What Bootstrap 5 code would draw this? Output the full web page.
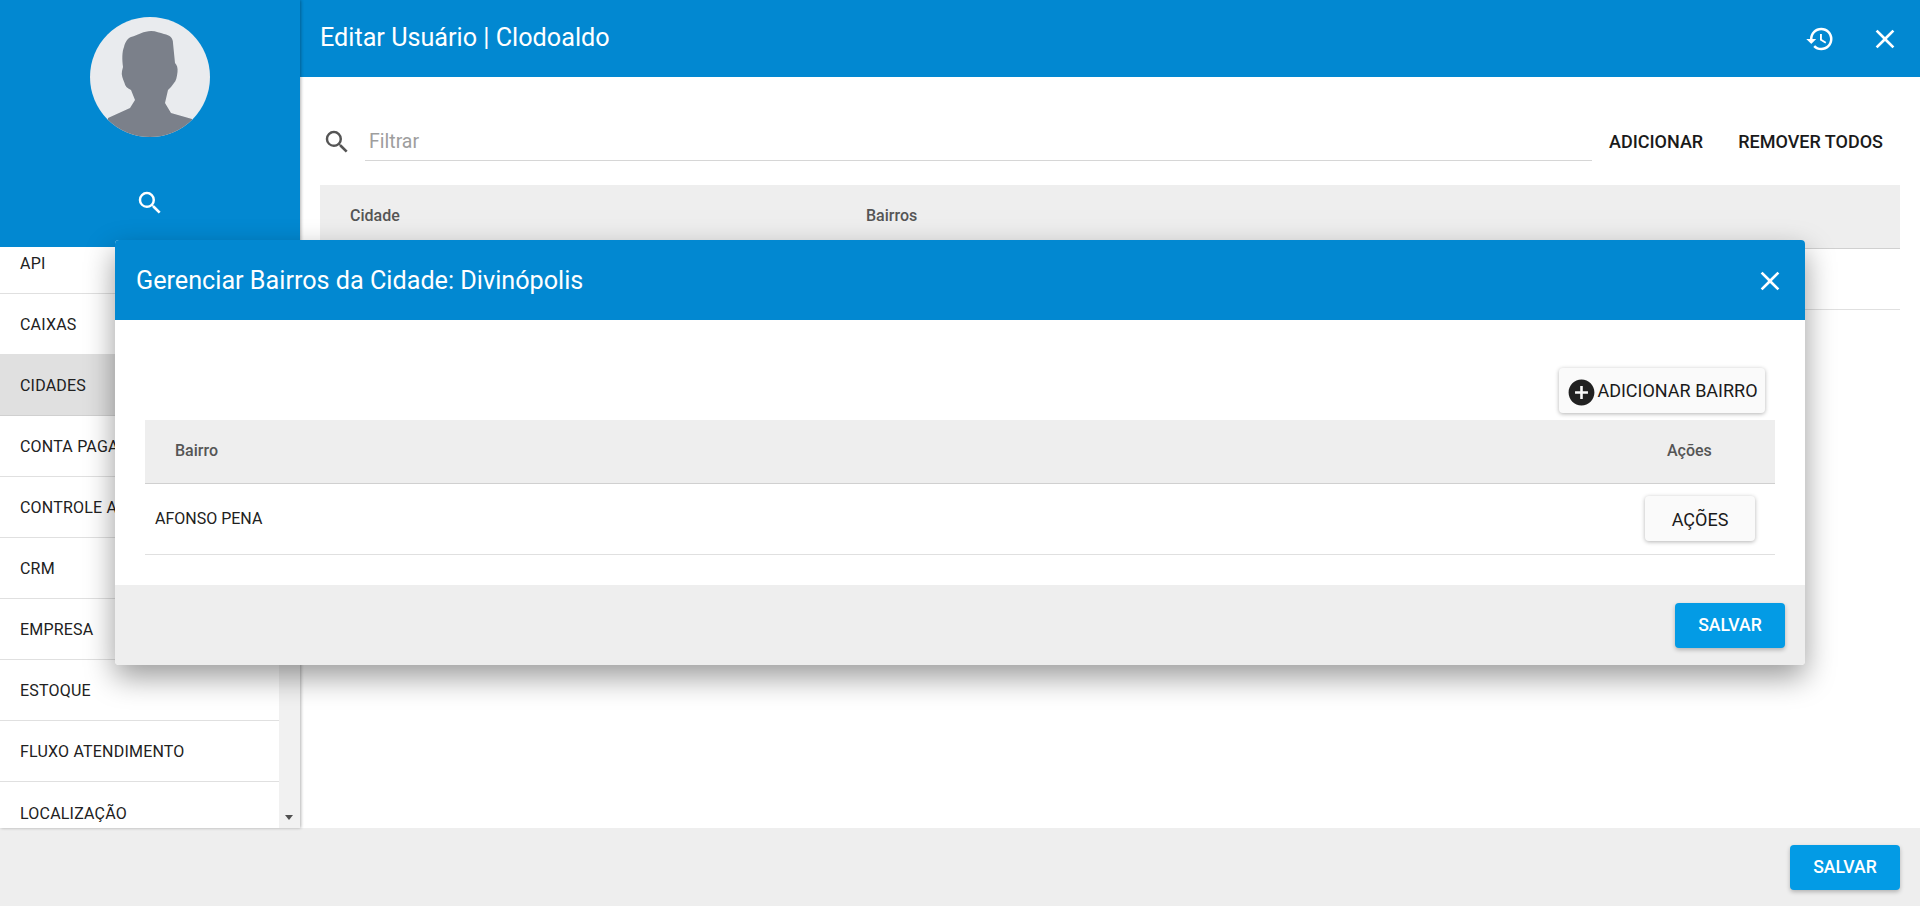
<!DOCTYPE html>
<html lang="pt-BR">
<head>
<meta charset="utf-8">
<title>Editar Usuário</title>
<link href="https://cdn.jsdelivr.net/npm/bootstrap@5.3.0/dist/css/bootstrap.min.css" rel="stylesheet">
<style>
html,body{height:100%;overflow:hidden}
body{font-family:Roboto,"Liberation Sans",sans-serif;color:#212121;font-size:14px;background:#fff}
.app-shell{height:906px;position:relative}
.app-main{height:828px}
.app-side{width:300px;flex:none;box-shadow:1px 0 3px rgba(0,0,0,.3);position:relative;z-index:1}
.side-top{height:247px;background:#0288d1;padding-top:17px}
.avatar-disc{width:120px;height:120px;border-radius:50%;overflow:hidden;display:block}
.side-search{margin-top:51px;height:30px}
.side-menu{height:581px;overflow:hidden}
.menu-col{width:279px;margin-top:-14px;flex:none}
.menu-entry{flex:none;height:61px;padding:2px 20px 0;display:flex;align-items:center;border:0;border-bottom:1px solid #e0e0e0;border-radius:0!important;color:#212121;font-size:16px;white-space:nowrap;letter-spacing:.2px}
.menu-entry.is-on{background:#e0e0e0;border-bottom-color:#d0d0d0}
.fake-track{width:21px;background:#f1f1f1;position:relative}
.fake-arrow{position:absolute;left:6px;bottom:8px;width:0;height:0;border:4.5px solid transparent;border-top:5px solid #505050;border-bottom:0}
.top-bar{height:77px;background:#0288d1;color:#fff;padding:0 19px 0 20px}
.top-title{font-size:25.2px;font-weight:400;margin:0}
.icon-plain{background:none;border:0;padding:0;display:flex;line-height:0}
.icon-gap{gap:34px}
.filter-row{padding:0 37px 0 22px;margin:33px 0 11px;height:64px}
.filter-box{border:0;border-bottom:1px solid #d6d6d6;border-radius:0;font-size:19.5px;padding:0 4px;height:38px;box-shadow:none!important;width:1227px;margin-left:13px;color:#212121}
.filter-box::placeholder{color:#9e9e9e}
.act-gap{gap:35px;margin-top:-2px}
.flat-act{font-size:18px;font-weight:500;color:#1a1a1a;padding:0;background:none;border:0;text-transform:uppercase}
.grid-wrap{padding:0 20px}
.data-tb{margin:0;table-layout:fixed;width:100%}
.data-tb th{background:#eee;color:#555;font-size:16px;font-weight:500;border-bottom:1px solid #d0d0d0;vertical-align:middle;padding:0 0 0 30px;height:63px;box-shadow:none}
.data-tb td{border-bottom:1px solid #e0e0e0;vertical-align:middle;padding:0 0 0 10px;color:#212121;height:61px;font-size:16px;box-shadow:none}
.bottom-bar{height:78px;background:#eee;padding:0 20px}
.save-btn{width:110px;height:45px;background:#039be5;border:0;color:#fff;font-size:17.6px;font-weight:500;border-radius:4px;box-shadow:0 2px 4px rgba(0,0,0,.25);padding:1px 0 0}
.pop-win{position:absolute;left:115px;top:240px;width:1690px;height:425px;border:0;border-radius:4px;background:#fff;box-shadow:0 12px 30px rgba(0,0,0,.4);overflow:visible;z-index:5}
.pop-head{height:80px;background:#0288d1;color:#fff;border:0;border-radius:4px 4px 0 0;padding:2px 19px 0 21px}
.pop-title{font-size:25.2px;font-weight:400;margin:0;line-height:1}
.pop-body{padding:48px 30px 0;height:265px;background:#fff}
.raise-btn{background:#fafafa;border:0;border-radius:4px;box-shadow:0 1px 4px rgba(0,0,0,.3);color:#1a1a1a;font-size:18px;font-weight:400;height:45px;padding:0}
.add-btn{width:206px;margin-right:10px}
.add-ico{margin-top:3px}
.act-btn{width:110px;font-size:18px;padding-top:1px}
.pop-tb th{height:63px}
.pop-tb td{height:71px}
.tb-gap{margin-top:7px}
.th-acts{padding-left:22px!important}
.td-acts{padding-left:0!important}
.pop-foot{height:80px;background:#eee;border:0;border-radius:0 0 4px 4px;padding:0 20px}
</style>
</head>
<body>
<div class="app-shell">
  <div class="app-main d-flex">
    <aside class="app-side d-flex flex-column">
      <div class="side-top d-flex flex-column align-items-center">
        <svg class="avatar-disc" viewBox="0 0 120 120" role="img" aria-label="Avatar">
          <rect width="120" height="120" fill="#e9ebee"/>
          <path fill="#7b808a" d="M61 14C66 14 70 16 74 17C80 18 83 21 83 26L85 46C87 48 88 51 87.5 55C87 60 86 64 84 66C82 69 80 71 78 73L75 86L81 96L102 102V120H18V101L40 91L45 83L41 73C37 71 35 69 34.500 66C33 62 31 58 32 54L33 50C32 42 32 35 34 30C35 25 38 21 41 20C48 18 54 14 61 14Z"/>
        </svg>
        <div class="side-search">
          <svg width="30" height="30" viewBox="0 0 24 24" fill="#fff"><path d="M15.5 14h-.79l-.28-.27A6.471 6.471 0 0 0 16 9.5 6.5 6.5 0 1 0 9.5 16c1.61 0 3.09-.59 4.23-1.57l.27.28v.79l5 4.99L20.49 19l-4.99-5zm-6 0C7.01 14 5 11.99 5 9.5S7.01 5 9.5 5 14 7.01 14 9.5 11.99 14 9.5 14z"/></svg>
        </div>
      </div>
      <div class="side-menu d-flex">
        <div class="menu-col list-group list-group-flush">
          <a class="list-group-item menu-entry">API</a>
          <a class="list-group-item menu-entry">CAIXAS</a>
          <a class="list-group-item menu-entry is-on">CIDADES</a>
          <a class="list-group-item menu-entry">CONTA PAGAR</a>
          <a class="list-group-item menu-entry">CONTROLE ACESSO</a>
          <a class="list-group-item menu-entry">CRM</a>
          <a class="list-group-item menu-entry">EMPRESA</a>
          <a class="list-group-item menu-entry">ESTOQUE</a>
          <a class="list-group-item menu-entry">FLUXO ATENDIMENTO</a>
          <a class="list-group-item menu-entry">LOCALIZAÇÃO</a>
        </div>
        <div class="fake-track"><span class="fake-arrow"></span></div>
      </div>
    </aside>
    <main class="flex-grow-1">
      <header class="top-bar d-flex align-items-center justify-content-between">
        <h1 class="top-title">Editar Usuário | Clodoaldo</h1>
        <div class="d-flex align-items-center icon-gap">
          <button class="icon-plain" aria-label="Histórico"><svg width="30" height="30" viewBox="0 0 24 24" fill="#fff"><path d="M13 3a9 9 0 0 0-9 9H1l3.89 3.89.07.14L9 12H6c0-3.87 3.13-7 7-7s7 3.13 7 7-3.13 7-7 7c-1.93 0-3.68-.79-4.94-2.06l-1.42 1.42A8.954 8.954 0 0 0 13 21a9 9 0 0 0 0-18zm-1 5v5l4.28 2.54.72-1.21-3.5-2.08V8H12z"/></svg></button>
          <button class="icon-plain" aria-label="Fechar"><svg width="32" height="32" viewBox="0 0 24 24" fill="#fff"><path d="M19 6.41L17.59 5 12 10.59 6.41 5 5 6.41 10.59 12 5 17.59 6.41 19 12 13.41 17.59 19 19 17.59 13.41 12z"/></svg></button>
        </div>
      </header>
      <div class="filter-row d-flex align-items-center">
        <svg width="30" height="30" viewBox="0 0 24 24" fill="#555"><path d="M15.5 14h-.79l-.28-.27A6.471 6.471 0 0 0 16 9.5 6.5 6.5 0 1 0 9.5 16c1.61 0 3.09-.59 4.23-1.57l.27.28v.79l5 4.99L20.49 19l-4.99-5zm-6 0C7.01 14 5 11.99 5 9.5S7.01 5 9.5 5 14 7.01 14 9.5 11.99 14 9.5 14z"/></svg>
        <input class="form-control filter-box" placeholder="Filtrar">
        <div class="d-flex ms-auto act-gap">
          <button class="btn flat-act">Adicionar</button>
          <button class="btn flat-act">Remover todos</button>
        </div>
      </div>
      <div class="grid-wrap">
        <table class="table data-tb">
          <colgroup><col style="width:516px"><col></colgroup>
          <thead><tr><th>Cidade</th><th>Bairros</th></tr></thead>
          <tbody><tr><td></td><td></td></tr></tbody>
        </table>
      </div>
    </main>
  </div>
  <footer class="bottom-bar d-flex align-items-center justify-content-end">
    <button class="btn save-btn">SALVAR</button>
  </footer>

  <section class="modal-content pop-win">
    <div class="modal-header pop-head d-flex justify-content-between">
      <h2 class="pop-title">Gerenciar Bairros da Cidade: Divinópolis</h2>
      <button class="icon-plain" aria-label="Fechar"><svg width="32" height="32" viewBox="0 0 24 24" fill="#fff"><path d="M19 6.41L17.59 5 12 10.59 6.41 5 5 6.41 10.59 12 5 17.59 6.41 19 12 13.41 17.59 19 19 17.59 13.41 12z"/></svg></button>
    </div>
    <div class="modal-body pop-body">
      <div class="d-flex justify-content-end">
        <button class="btn raise-btn add-btn d-flex align-items-center justify-content-center">
          <svg class="add-ico" width="31" height="31" viewBox="0 0 24 24" fill="#212121"><path d="M12 2C6.48 2 2 6.48 2 12s4.48 10 10 10 10-4.48 10-10S17.52 2 12 2zm5 11h-4v4h-2v-4H7v-2h4V7h2v4h4v2z"/></svg>ADICIONAR BAIRRO
        </button>
      </div>
      <div class="tb-gap">
        <table class="table data-tb pop-tb">
          <colgroup><col><col style="width:130px"></colgroup>
          <thead><tr><th>Bairro</th><th class="th-acts">Ações</th></tr></thead>
          <tbody><tr><td>AFONSO PENA</td><td class="td-acts"><button class="btn raise-btn act-btn">AÇÕES</button></td></tr></tbody>
        </table>
      </div>
    </div>
    <div class="modal-footer pop-foot d-flex justify-content-end">
      <button class="btn save-btn m-0">SALVAR</button>
    </div>
  </section>
</div>
<script src="https://cdn.jsdelivr.net/npm/bootstrap@5.3.0/dist/js/bootstrap.bundle.min.js"></script>
</body>
</html>
